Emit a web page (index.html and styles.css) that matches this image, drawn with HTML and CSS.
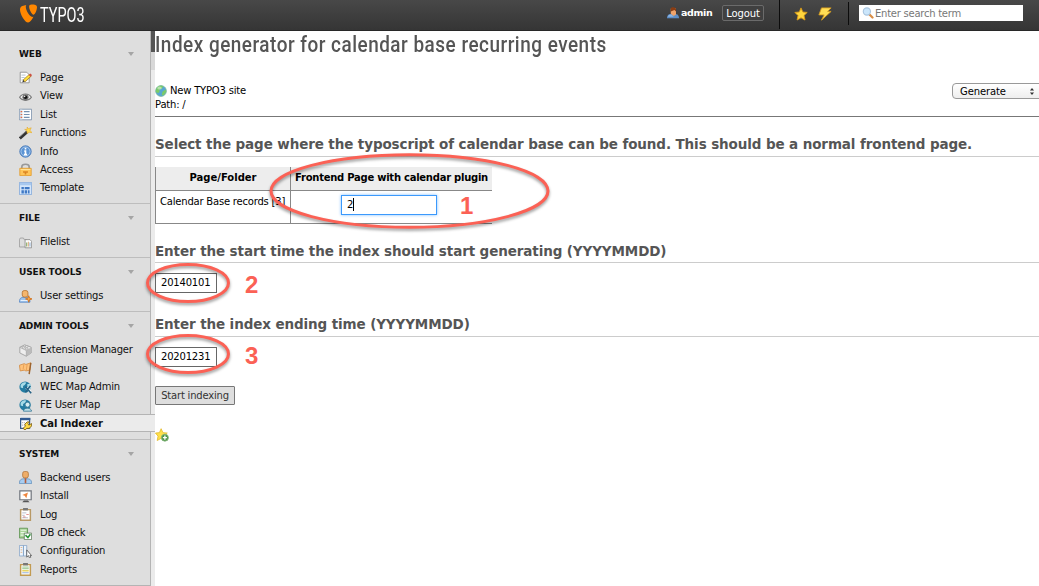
FILE: index.html
```html
<!DOCTYPE html>
<html lang="en">
<head>
<meta charset="utf-8">
<title>TYPO3 - Cal Indexer</title>
<link rel="stylesheet" href="styles.css">
</head>
<body>
<header class="topbar">
  <div class="brand">
    <svg class="brand-mark" viewBox="0 0 18 19"><path fill="#ff8700" d="M13.4 12.8c-.4.1-.7.1-1 .1-3 0-6.600-7-6.600-9.900 0-.9.100-1.500.5-1.900C3.500 1.500.6 2.500.3 4 .1 4.600 0 5 0 5.700 0 9.900 4.700 18.500 8.200 18.500c1.600 0 3.800-2.600 5.200-5.700"/><path fill="#ff8700" d="M11.600.5c3.200 0 5.400.6 5.400 2.400 0 3.600-2.200 7.800-3.400 7.800-2 0-4.500-5.500-4.500-8.200 0-1.300.8-2 2.500-2"/></svg>
    <span class="brand-name">TYPO3</span>
  </div>
  <div class="user">
    <svg class="ic-user" viewBox="0 0 16 16"><path fill="#5d8fc9" d="M0 15c0-5 3-6 8-6s8 1 8 6z"/><path fill="#8fb6e2" d="M1 13c1-3 3-3 5-3l3 3z"/><path fill="#efa46b" d="M5 2h7v8l-3 2-4-3z"/><path fill="#8b3d13" d="M5 6V2c1-3 7-2 7 1v3l-2-2z"/></svg>
    <b class="user-name">admin</b>
    <span class="logout">Logout</span>
  </div>
  <div class="tools">
    <svg class="ic-tool" viewBox="0 0 16 16"><path fill="#ffd63d" stroke="#dc9b18" d="m8 1 2.100 4.700 5 .5-3.700 3.600 1.200 5.100L8 12.400l-4.500 2.500 1.100-5.100L1 6.200l5-.5z"/></svg>
    <svg class="ic-tool" viewBox="0 0 16 16"><path fill="#ffdd55" stroke="#d29a20" d="M4 1h11l-4 4h4L4 15l3-6H1z"/></svg>
  </div>
  <div class="search"><svg class="ic-search" viewBox="0 0 16 16"><path stroke="#d98e46" stroke-width="3" stroke-linecap="round" d="m10 10 4 4"/><circle cx="6.500" cy="6" r="4.800" fill="#cbe6fb" stroke="#a9c5df" stroke-width="1.500"/></svg><span class="search-hint">Enter search term</span></div>
</header>
<div class="shell">
  <nav class="menu">
    <section class="group">
      <h3 class="group-head">WEB<i class="caret"></i></h3>
      <a class="item"><svg class="icon" viewBox="0 0 16 16"><path fill="#fff" stroke="#888" d="M1.500 1.500h8l3 3v10h-11z"/><path stroke="#a8b9c9" d="M3 5h5M3 8h4M3 11h3"/><path stroke="#9c7219" stroke-width="4" d="M6 12.500 14 5"/><path stroke="#ffe13e" stroke-width="2.500" d="M6.500 12 14 5"/><path fill="#333" d="m4 14 1-3 2 2z"/><path stroke="#cc5144" stroke-width="3" d="m13 6 2-2"/></svg>Page</a>
      <a class="item"><svg class="icon" viewBox="0 0 16 16"><path fill="#eee" stroke="#777" stroke-width="1.300" d="M.7 9C4 3.500 12 3.500 15.300 9 12 14 4 14 .7 9z"/><circle cx="8" cy="9" r="3.800" fill="#777"/><circle cx="8" cy="9" r="2.200" fill="#111"/><circle cx="7" cy="8" r=".8" fill="#fff"/></svg>View</a>
      <a class="item"><svg class="icon" viewBox="0 0 16 16"><path fill="#fff" stroke="#7189a5" d="M.5 1.500h15v13H.5z"/><path fill="#d6e1ee" d="M1 2h3v12H1z"/><path stroke="#e16d45" stroke-width="1.500" d="M2 4.500h2M2 8h2M2 11.500h2"/><path stroke="#7592b2" stroke-width="1.500" d="M6 4.500h7M6 8h7M6 11.500h7"/></svg>List</a>
      <a class="item"><svg class="icon" viewBox="0 0 16 16"><path stroke="#333" stroke-width="3.500" d="m1 14 9-8"/><path stroke="#888" d="m1 12 8-7"/><path fill="#ffdb50" stroke="#e5a62b" stroke-width=".7" d="m10 0 1.500 2L15 1l-1.500 3L16 7l-3.500-.5L10 8V5L7 3h3z"/></svg>Functions</a>
      <a class="item"><svg class="icon" viewBox="0 0 16 16"><circle cx="8" cy="8" r="7" fill="#5c94d4" stroke="#386db1"/><circle cx="8" cy="8" r="5.600" fill="none" stroke="#b5d2f0"/><path stroke="#fff" stroke-width="2" d="M8 3.500v2M8 6.500v5M6.500 7.500H8M6 11.800h4"/></svg>Info</a>
      <a class="item"><svg class="icon" viewBox="0 0 16 16"><path fill="none" stroke="#999" stroke-width="2" d="M3.500 8V4.500C3.500.5 12.500.5 12.500 4.500V8"/><path fill="#ffc55a" stroke="#e29a27" d="M1 6.500h14v9H1z"/><path stroke="#ffe8a7" d="M2 8h12"/><path fill="#db8524" d="M5 10h6v2H9v2H7v-2H5z"/></svg>Access</a>
      <a class="item"><svg class="icon" viewBox="0 0 16 16"><path fill="#d5e6fa" stroke="#7ea5d9" d="M.5.500h15v15H.5z"/><path fill="#a7c8ef" d="M1 1h14v3H1z"/><path fill="#3f79c5" d="M3 6h3v3H3zM7 6h6v3H7zM3 10h3v4H3zM7 10h3v4H7zM11 10h2v4h-2z"/></svg>Template</a>
    </section>
    <section class="group">
      <h3 class="group-head">FILE<i class="caret"></i></h3>
      <a class="item"><svg class="icon" viewBox="0 0 16 16"><path fill="#ddd" stroke="#999" d="M.5 13.500V4.500l1-2h4l1 2h3v9z"/><path fill="#fff" stroke="#888" d="M7.500 4.500h6l2 2v8h-8z"/><path stroke="#7fa45b" stroke-width="1.300" d="M9.500 8v5"/><path stroke="#d4955b" d="M11.500 7v6"/><path stroke="#6993c2" d="M13.500 8v5"/></svg>Filelist</a>
    </section>
    <section class="group">
      <h3 class="group-head">USER TOOLS<i class="caret"></i></h3>
      <a class="item"><svg class="icon" viewBox="0 0 16 16"><path fill="#9ec4ee" stroke="#5788c5" d="M.5 15c0-6 3-6 7-6s6 1 6 6z"/><path stroke="#fff" d="M2 13h9"/><rect x="4" y=".7" width="7" height="8" rx="2.500" fill="#f5b66d" stroke="#b46f2c"/><path fill="#ffaa41" stroke="#d26b13" d="m12 7 1 3 3 1-3 1-1 3-1-3-3-1 3-1z"/></svg>User settings</a>
    </section>
    <section class="group">
      <h3 class="group-head">ADMIN TOOLS<i class="caret"></i></h3>
      <a class="item"><svg class="icon" viewBox="0 0 16 16"><path fill="#eee" stroke="#999" d="m1 4 6-3 8 3v7l-6 4-8-4z"/><path fill="#bbb" d="m9 8 6-4v7l-6 4z"/><path fill="none" stroke="#aaa" d="m1 4 8 4v7"/><path fill="#fff" stroke="#aaa" d="M4 3h3v2H4zM8 2h3v2H8zM8 5h3v2H8z"/></svg>Extension Manager</a>
      <a class="item"><svg class="icon" viewBox="0 0 16 16"><path fill="#ffc27a" stroke="#d38a41" d="m.5 4 6-2 2 1 6-2-1 9-5 1-2-1-5 1z"/><path stroke="#e19a50" d="m6 3-1 6M10 3 9 10"/><path stroke="#9d642f" stroke-width="1.800" d="m14.500 1-2 14"/></svg>Language</a>
      <a class="item"><svg class="icon" viewBox="0 0 16 16"><circle cx="7.500" cy="7.500" r="7" fill="#247ca2"/><path fill="#a7dbe7" d="M2 5c2-4 5-4 7-3L7 5 5 6v3L2 8zM10 4l4-1 1 6-4 2z"/><path stroke="#fff" stroke-width="3" d="m9 8 5 5"/><path stroke="#266184" stroke-width="2" d="m8 14 6-8M8 7l7 8"/></svg>WEC Map Admin</a>
      <a class="item"><svg class="icon" viewBox="0 0 16 16"><circle cx="7.500" cy="7.500" r="7" fill="#247ca2"/><path fill="#a7dbe7" d="M2 5c2-4 5-4 7-3L7 5 5 6v3L2 8z"/><circle cx="10.500" cy="7" r="3" fill="#d7edf2" stroke="#397a96"/><path fill="#bfe0e9" stroke="#397a96" d="M5.500 15c0-5 9.500-5 10 0z"/></svg>FE User Map</a>
      <a class="item item-active"><svg class="icon" viewBox="0 0 16 16"><path fill="#fff" stroke="#345989" stroke-width="1.500" d="M2 2h11v12H2z"/><path fill="#315b92" d="M2 1h12v3H2z"/><path stroke="#777" stroke-dasharray="1 1" d="M4 7h4M4 10h3"/><path fill="#ffdc46" stroke="#75550c" d="m5 14 3-3-1-2 3-3h3L11 8l1 2 2-1 1.500-1v3l-3 3h-3l-2 2z"/></svg>Cal Indexer</a>
    </section>
    <section class="group">
      <h3 class="group-head">SYSTEM<i class="caret"></i></h3>
      <a class="item"><svg class="icon" viewBox="0 0 16 16"><path fill="#a7cdf1" stroke="#6290bd" d="M.5 15.500c0-5 2-6 7.500-6s7.500 1 7.500 6z"/><rect x="4.500" y=".5" width="7" height="8" rx="2.500" fill="#eead68" stroke="#b27439"/><path fill="#b65c39" d="M7 9h2v6H7z"/></svg>Backend users</a>
      <a class="item"><svg class="icon" viewBox="0 0 16 16"><path fill="#fff" stroke="#71767d" stroke-width="1.500" d="M1 1h14v11H1z"/><path fill="#555" d="M6 13h5l2 2H4z"/><path fill="#ee853d" d="m4 6 7-3-2 7-2-3z"/></svg>Install</a>
      <a class="item"><svg class="icon" viewBox="0 0 16 16"><path fill="#fff" stroke="#b89966" stroke-width="1.800" d="M2 2h12v13H2z"/><path fill="#777" d="M5 0h6v3H5z"/><path stroke="#a9acc0" d="M4 6h5M4 9h3M4 12h7"/><path stroke="#dc7878" d="M9 8h3M5 11h3"/></svg>Log</a>
      <a class="item"><svg class="icon" viewBox="0 0 16 16"><path fill="#a9d498" stroke="#598f4c" d="M.5 1.500h10v12H.5z"/><path stroke="#eaf7e5" stroke-width="1.500" d="M2 4h7M2 7h7M2 10h4"/><path fill="#fff" stroke="#5e7a5a" d="M6.500 7.500h9v8h-9z"/><path fill="none" stroke="#269334" stroke-width="1.800" d="m8 10 3 3 3-4"/></svg>DB check</a>
      <a class="item"><svg class="icon" viewBox="0 0 16 16"><path fill="#edf4fc" stroke="#86a5c8" d="M.5.500h5v13h-5zM5.500.500h4v13h-4z"/><path stroke="#dfa872" d="M2 3h2M2 6h2M2 9h2"/><path fill="#fff" stroke="#555" d="M9.500 6v9l2-2 1.500 3 1.500-1-1-2h2z"/></svg>Configuration</a>
      <a class="item"><svg class="icon" viewBox="0 0 16 16"><path fill="#fff" stroke="#c29b52" stroke-width="1.800" d="M2 2h12v13H2z"/><path fill="#777" d="M5 0h6v3H5z"/><path stroke="#7bb870" d="M4 5h8M4 7h8"/><path stroke="#e8d463" stroke-width="2" d="M4 9.500h8"/><path stroke="#7b9fd3" d="M4 12h8"/></svg>Reports</a>
    </section>
  </nav>
  <div class="gutter"><div class="grip"></div><div class="grip-tail"></div></div>
  <main class="content">
    <h1 class="title"><span class="title-text">Index generator for calendar base recurring events</span></h1>
    <div class="docinfo">
      <div class="path">
        <div class="site"><svg class="globe" viewBox="0 0 16 16"><circle cx="8" cy="8" r="7.200" fill="#58a6d4" stroke="#7eb896"/><path fill="#7acb68" d="M2 4c3-4 8-3 9-2L9 5 6 6v3L4 11 1 9zM10 9l4-3 1 3-4 5-2-1z"/><ellipse cx="6" cy="4" rx="3" ry="2" fill="#fff" opacity=".45"/></svg>New TYPO3 site</div>
        <div>Path: /</div>
      </div>
      <div class="select"><span>Generate</span><svg class="updown" viewBox="0 0 6 10"><path fill="#333" d="m3 1 2.300 3H.7zM3 9l2.300-3H.7z"/></svg></div>
    </div>
    <h2 class="heading">Select the page where the typoscript of calendar base can be found. This should be a normal frontend page.</h2>
    <table class="grid">
      <tr class="grid-head"><th class="col-page">Page/Folder</th><th>Frontend Page with calendar plugin</th></tr>
      <tr class="grid-row"><td>Calendar Base records [3]</td><td><div class="field field-focus">2<i class="cursor"></i></div></td></tr>
    </table>
    <h2 class="heading heading-start">Enter the start time the index should start generating (YYYYMMDD)</h2>
    <div class="field field-date">20140101</div>
    <h2 class="heading heading-end">Enter the index ending time (YYYYMMDD)</h2>
    <div class="field field-date">20201231</div>
    <div class="button">Start indexing</div>
    <svg class="shortcut" viewBox="0 0 16 16"><path fill="#ffe14a" stroke="#e5bd32" d="m7 .8 2 4.500 5 .5-3.700 3.500 1 5L7 11.800l-4.500 2.500 1-5L.5 5.800l4.600-.5z"/><circle cx="11.300" cy="11" r="4" fill="#4c9447" stroke="#87b67e"/><path stroke="#fff" stroke-width="1.500" d="M9 11h4.600M11.300 8.700v4.600"/></svg>
  </main>
</div>
<svg class="notes" viewBox="0 0 1039 586">
  <g class="rings"><ellipse cx="409.500" cy="191" rx="138.500" ry="36.300"/><ellipse cx="188" cy="283" rx="40.500" ry="18.500"/><ellipse cx="188" cy="354" rx="40.500" ry="18.500"/></g>
  <g class="numbers"><text x="460" y="214">1</text><text x="245" y="293">2</text><text x="245" y="364">3</text></g>
</svg>
</body>
</html>
```
FILE: styles.css
```css
* { box-sizing: border-box; }
body {
  margin: 0;
  width: 1039px;
  height: 586px;
  overflow: hidden;
  position: relative;
  background: #fff;
  color: #000;
  font: 10px/14px "DejaVu Sans", Verdana, sans-serif;
  letter-spacing: -.2px;
}
svg { display: block; flex: none; fill: none; }

.topbar {
  height: 31px;
  display: flex;
  align-items: flex-start;
  background: linear-gradient(#484848, #353535);
  border-bottom: 1px solid #282828;
  color: #fff;
}
.brand { width: 667px; display: flex; padding: 4px 0 0 20px; }
.brand-mark { width: 18px; height: 19px; }
.brand-name {
  font: 19.5px/23px Roboto, sans-serif;
  letter-spacing: 0;
  margin-left: 2px;
  transform: scaleX(.74);
  transform-origin: left;
}
.user { width: 112px; display: flex; align-items: center; padding-top: 5px; }
.ic-user { width: 12px; height: 12px; margin-right: 2px; }
.user-name { width: 41px; font-size: 9.5px; letter-spacing: -.35px; }
.logout {
  width: 42px;
  height: 16px;
  border: 1px solid #6b6b6b;
  border-radius: 2px;
  background: #404040;
  line-height: 15px;
  letter-spacing: -.1px;
  text-align: center;
}
.tools {
  width: 70px;
  height: 29px;
  display: flex;
  gap: 10px;
  padding: 7px 0 0 14px;
  border-left: 1px solid #0c0c0c;
}
.ic-tool { width: 14px; height: 14px; }
.search {
  position: relative;
  width: 164px;
  height: 16px;
  margin: 5px 0 0 10px;
  display: flex;
  align-items: center;
  background: #fff;
  color: #777;
}
.search::before {
  content: "";
  position: absolute;
  left: -11px;
  top: -3px;
  width: 1px;
  height: 23px;
  background: #0c0c0c;
}
.ic-search { width: 12px; height: 12px; margin: 0 1px 0 3px; }
.search-hint { padding-top: 2px; letter-spacing: -.25px; }

.shell { display: flex; height: 555px; }
.menu {
  width: 151px;
  padding-top: 8px;
  background: #dedede;
  border-right: 1px solid #b4b4b4;
  color: #111;
}
.group { border-top: 1px solid #bdbdbd; padding-bottom: 6.8px; }
.group:first-child { border-top-color: transparent; }
.group:last-child { border-bottom: 1px solid #b4b4b4; }
.group-head {
  display: flex;
  justify-content: space-between;
  align-items: center;
  height: 27.8px;
  margin: 0;
  padding: 0 16px 0 19px;
  font-size: 9px;
  line-height: 12px;
  letter-spacing: -.1px;
}
.caret { border: 3px solid transparent; border-top: 4px solid #a5a5a5; border-bottom: 0; }
.item { display: flex; align-items: center; height: 18.4px; padding: 2px 0 0 19px; white-space: nowrap; }
.icon { width: 13px; height: 13px; margin-right: 8px; }
.item-active {
  position: relative;
  width: 155px;
  height: 18px;
  margin-bottom: .4px;
  background: #ebebeb;
  border: solid #b4b4b4;
  border-width: 1px 0;
  font-weight: bold;
  letter-spacing: -.1px;
}
.gutter { width: 4px; background: #ebebeb; }
.grip { height: 21px; background: #555; }
.grip-tail { height: 18px; background: #d8d8d8; }

.content { width: 884px; overflow: hidden; }
.title { margin: 0; height: 52px; color: #555; font: 500 22.5px/26px Roboto, sans-serif; letter-spacing: .6px; }
.title-text { display: inline-block; white-space: nowrap; transform-origin: left; transform: scaleX(.841); }
.docinfo { display: flex; justify-content: space-between; height: 34px; border-bottom: 1px solid #777; }
.path { padding-top: 1px; }
.site { display: flex; align-items: center; }
.globe { width: 12px; height: 12px; margin-right: 3px; }
.select {
  width: 92px;
  height: 16px;
  display: flex;
  justify-content: space-between;
  align-items: center;
  padding: 1px 8px 0 7px;
  margin-right: -5px;
  border: 1px solid #999;
  border-radius: 4px;
  background: linear-gradient(#fff, #eee);
  letter-spacing: -.1px;
}
.updown { width: 6px; height: 9px; }
.heading {
  margin: 0;
  padding-top: 18px;
  height: 40px;
  color: #555;
  font-size: 13.5px;
  line-height: 18px;
  letter-spacing: -.11px;
  border-bottom: 1px solid #ccc;
  white-space: nowrap;
}
.grid { width: 337px; margin-top: 10px; border-collapse: collapse; table-layout: fixed; }
.grid th, .grid td { padding: 0 4px; border: solid #888; border-width: 0 0 1px 1px; }
.grid-head { height: 23px; background: #ededed; white-space: nowrap; }
.grid-head th { letter-spacing: -.25px; }
.grid-head .col-page { width: 135px; letter-spacing: 0; }
.grid-row { height: 33px; vertical-align: top; }
.grid .grid-row td { padding-top: 4px; white-space: nowrap; }
.field { border: 1px solid #666; height: 20px; padding: 0 5px; line-height: 18px; background: #fff; }
.field-focus {
  width: 96px;
  margin: 0 0 0 46px;
  border-color: #3b99fc;
  box-shadow: 0 0 3px #82bfff;
  display: flex;
  align-items: center;
}
.cursor { width: 1px; height: 13px; background: #000; }
.heading-start { height: 39px; }
.heading-end { height: 44px; padding-top: 22px; }
.field-date { width: 62px; margin-top: 10px; }
.button {
  width: 80px;
  height: 19px;
  margin-top: 19px;
  border: 1px solid #777;
  border-radius: 1px;
  background: #dedede;
  color: #333;
  line-height: 17px;
  text-align: center;
}
.shortcut { width: 14px; height: 14px; margin-top: 23px; }
.notes { position: absolute; left: 0; top: 0; width: 1039px; height: 586px; pointer-events: none; letter-spacing: 0; }
.rings { stroke: #fb6155; stroke-width: 3; filter: drop-shadow(0 2px 1.5px rgba(0, 0, 0, .4)); }
.numbers { fill: #fb6155; font: bold 24px "Liberation Sans", sans-serif; }
```
